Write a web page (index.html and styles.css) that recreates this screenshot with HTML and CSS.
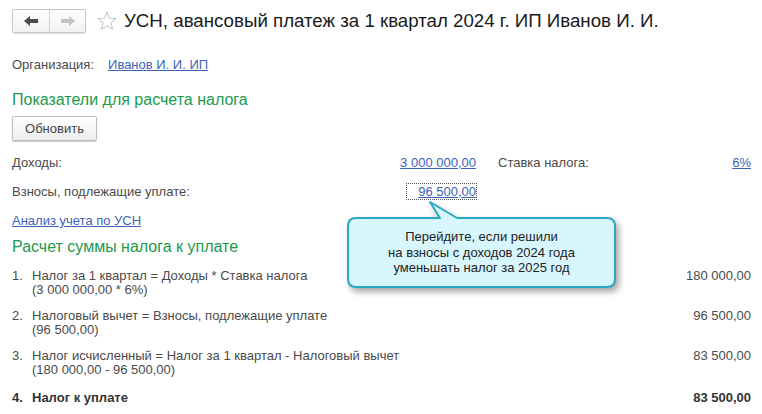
FILE: index.html
```html
<!DOCTYPE html>
<html lang="ru">
<head>
  <meta charset="UTF-8">
  <meta name="viewport" content="width=device-width, initial-scale=1.0">
  <title>УСН, авансовый платеж за 1 квартал 2024 г.</title>
  <link rel="stylesheet" href="styles.css">
</head>
<body>
  <div class="page">
    <div class="head">
      <div class="nav">
        <button class="nav-btn" title="Назад">
          <svg width="14" height="10" viewBox="0 0 14 10"><path d="M0 5 L6 0 L6 3 L14 3 L14 7 L6 7 L6 10 Z" fill="#4a4a4a"/></svg>
        </button>
        <button class="nav-btn" title="Вперед">
          <svg width="14" height="10" viewBox="0 0 14 10"><path d="M14 5 L8 0 L8 3 L0 3 L0 7 L8 7 L8 10 Z" fill="#c4c4c4"/></svg>
        </button>
      </div>
      <svg class="star" width="20" height="20" viewBox="0 0 20 20"><path d="M10 1.2 L12.6 7.2 L19 7.6 L14.1 11.8 L15.6 18.3 L10 14.9 L4.4 18.3 L5.9 11.8 L1 7.6 L7.4 7.2 Z" fill="none" stroke="#c9c9c9" stroke-width="1.1" stroke-linejoin="round"/></svg>
      <h1>УСН, авансовый платеж за 1 квартал 2024 г. ИП Иванов И. И.</h1>
    </div>

    <div class="org">
      <span class="label">Организация:</span>
      <a href="#" class="link">Иванов И. И. ИП</a>
    </div>

    <h2 class="group">Показатели для расчета налога</h2>
    <button class="btn">Обновить</button>

    <div class="indicators">
      <span class="label">Доходы:</span>
      <a href="#" class="link num">3 000 000,00</a>
      <span></span>
      <span class="label">Ставка налога:</span>
      <a href="#" class="link num">6%</a>

      <span class="label">Взносы, подлежащие уплате:</span>
      <span class="num"><a href="#" class="link focused">96 500,00</a></span>
    </div>

    <a href="#" class="link analysis">Анализ учета по УСН</a>

    <h2 class="group group-calc">Расчет суммы налога к уплате</h2>
    <ol class="calc">
      <li>
        <span class="n">1.</span>
        <span class="formula">Налог за 1 квартал = Доходы * Ставка налога<br>(3 000 000,00 * 6%)</span>
        <span class="sum">180 000,00</span>
      </li>
      <li>
        <span class="n">2.</span>
        <span class="formula">Налоговый вычет = Взносы, подлежащие уплате<br>(96 500,00)</span>
        <span class="sum">96 500,00</span>
      </li>
      <li>
        <span class="n">3.</span>
        <span class="formula">Налог исчисленный = Налог за 1 квартал - Налоговый вычет<br>(180 000,00 - 96 500,00)</span>
        <span class="sum">83 500,00</span>
      </li>
      <li class="total">
        <span class="n">4.</span>
        <span class="formula">Налог к уплате</span>
        <span class="sum">83 500,00</span>
      </li>
    </ol>

    <div class="callout">
      <svg width="290" height="105" viewBox="0 0 290 105">
        <path d="M16 23 L100 23 L90 7 L117 23 L267 23 Q275 23 275 31 L275 84 Q275 92 267 92 L16 92 Q8 92 8 84 L8 31 Q8 23 16 23 Z" fill="#d8f6fd" stroke="#2aa9c4" stroke-width="2" stroke-linejoin="round"/>
      </svg>
      <div class="callout-text">Перейдите, если решили<br>на взносы с доходов 2024 года<br>уменьшать налог за 2025 год</div>
    </div>
  </div>
</body>
</html>
```

FILE: styles.css
```css
body {
  margin: 0;
  font-family: "Liberation Sans", Arial, sans-serif;
  font-size: 13px;
  color: #4a4a4a;
  background: #fff;
}
.page {
  position: relative;
  padding: 9px 11px 0 12px;
}
.head {
  display: flex;
  align-items: center;
  height: 24px;
}
.nav {
  display: flex;
  border: 1px solid #c6c6c6;
  border-radius: 2px;
  box-shadow: 0 1px 1px rgba(0, 0, 0, 0.12);
}
.nav-btn {
  width: 36px;
  height: 22px;
  padding: 0;
  border: none;
  background: linear-gradient(#ffffff, #f1f1f1);
  display: flex;
  align-items: center;
  justify-content: center;
}
.nav-btn + .nav-btn {
  border-left: 1px solid #d2d2d2;
}
.star {
  margin: 0 7px 0 11px;
}
h1 {
  margin: 0;
  font-size: 18.7px;
  font-weight: normal;
  color: #1a1a1a;
  white-space: nowrap;
}
.org {
  display: flex;
  gap: 14px;
  margin-top: 24px;
  line-height: 15px;
}
.link {
  color: #3c63b8;
  text-decoration: underline;
}
.group {
  margin: 19px 0 0;
  font-size: 16px;
  line-height: 18px;
  font-weight: normal;
  color: #1b9a4b;
}
.group-calc {
  margin-top: 10px;
}
.btn {
  display: block;
  margin-top: 7px;
  width: 85px;
  height: 25px;
  padding: 0;
  font: inherit;
  color: #444;
  border: 1px solid #bdbdbd;
  border-radius: 2px;
  background: linear-gradient(#ffffff, #ededed);
  box-shadow: 0 1px 1px rgba(0, 0, 0, 0.2);
}
.indicators {
  display: grid;
  grid-template-columns: 200px 264px 22px 120px 1fr;
  grid-auto-rows: 15px;
  row-gap: 14px;
  margin-top: 14px;
  line-height: 15px;
}
.num {
  text-align: right;
}
.focused {
  outline: 1px dotted #555;
  outline-offset: 0;
  padding: 0 0 0 11px;
}
.analysis {
  display: inline-block;
  margin-top: 14px;
  line-height: 15px;
}
.calc {
  list-style: none;
  margin: 13px 0 0;
  padding: 0;
}
.calc li {
  display: flex;
  line-height: 14px;
  margin-bottom: 12px;
}
.calc .n {
  width: 20px;
  flex: none;
}
.calc .formula {
  flex: 1;
}
.calc .sum {
  text-align: right;
}
.calc .total {
  margin-top: 14px;
  font-weight: bold;
  color: #333;
}
.callout {
  position: absolute;
  left: 340px;
  top: 195px;
  width: 290px;
  height: 105px;
}
.callout svg {
  display: block;
  filter: drop-shadow(3px 4px 3px rgba(0, 0, 0, 0.35));
}
.callout-text {
  position: absolute;
  left: 8px;
  top: 23px;
  width: 267px;
  height: 69px;
  display: flex;
  align-items: center;
  justify-content: center;
  text-align: center;
  line-height: 15.5px;
  color: #222;
}
```
